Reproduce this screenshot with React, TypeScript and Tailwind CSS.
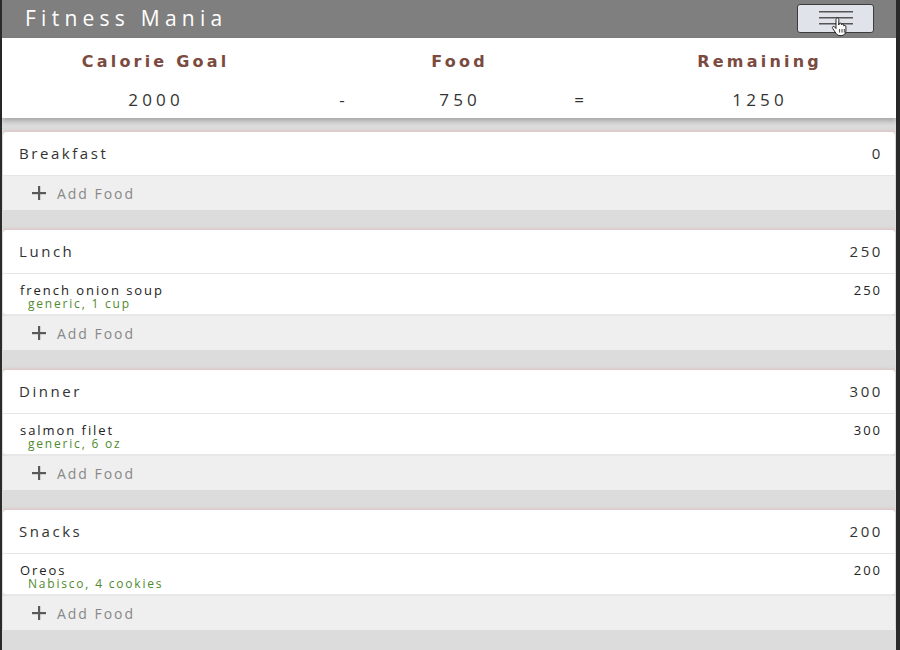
import React from "react";

type Food = { name: string; detail: string; cals: number };
type Meal = { title: string; total: number; foods: Food[] };

const meals: Meal[] = [
  { title: "Breakfast", total: 0, foods: [] },
  { title: "Lunch", total: 250, foods: [{ name: "french onion soup", detail: "generic, 1 cup", cals: 250 }] },
  { title: "Dinner", total: 300, foods: [{ name: "salmon filet", detail: "generic, 6 oz", cals: 300 }] },
  { title: "Snacks", total: 200, foods: [{ name: "Oreos", detail: "Nabisco, 4 cookies", cals: 200 }] },
];

const font = { fontFamily: '"Open Sans", "DejaVu Sans", sans-serif' };

const MenuButton = () => (
  <button className="relative self-start mt-[4px] w-[77px] h-[29px] rounded-[3px] border border-[#3c3c3c] bg-[#e1e3ea] flex items-center justify-center">
    <svg width="36" height="18" viewBox="0 0 36 18">
      <rect x="1" y="1" width="34" height="1.5" fill="#555" />
      <rect x="1" y="7" width="34" height="1.5" fill="#555" />
      <rect x="1" y="13" width="34" height="1.5" fill="#555" />
    </svg>
    <svg className="absolute left-[32px] top-[12px]" width="20" height="20" viewBox="0 0 20 20">
      <path
        d="M6 2.5c0-.9.6-1.5 1.4-1.5s1.4.6 1.4 1.5V8l.2-1c.2-.7.8-1 1.4-.9.6.1 1 .6 1 1.2v.6c.2-.6.7-.9 1.3-.8.6.1 1 .6 1 1.2v.8c.2-.5.7-.8 1.2-.7.6.1 1 .6 1 1.2V14c0 2.6-2 4.6-4.6 4.6H10c-1.6 0-3-.8-3.9-2.1L2.6 11.3c-.4-.6-.2-1.3.3-1.7.6-.4 1.3-.3 1.7.2L6 11.6z"
        fill="#fff"
        stroke="#111"
        strokeWidth="0.9"
        strokeLinejoin="round"
      />
      <path d="M9.6 12v3.6M12 12v3.6M14.3 12v3.6" stroke="#111" strokeWidth="0.8" />
    </svg>
  </button>
);

const Plus = () => (
  <svg width="14" height="14" viewBox="0 0 14 14">
    <rect x="0" y="6" width="14" height="2.2" fill="#5a5a5a" />
    <rect x="6" y="0" width="2.2" height="14" fill="#5a5a5a" />
  </svg>
);

const MealCard = ({ meal }: { meal: Meal }) => (
  <div className="mx-[1px] shadow-[0_-2px_3px_-1px_rgba(230,140,140,0.35)]">
    <div className="bg-white rounded-t-[4px] h-[44px] flex items-center justify-between pl-[16px] pr-[12px] text-[15px] text-[#333] tracking-[0.17em] border-b border-[#e6e6e6]">
      <span>{meal.title}</span>
      <span>{meal.total}</span>
    </div>
    {meal.foods.map((f) => (
      <div
        key={f.name}
        className="bg-white h-[42px] flex justify-between pl-[17px] pr-[13px] pt-[9px] border-b-2 border-[#e8e8e8] rounded-b-[4px]"
      >
        <div className="flex flex-col">
          <span className="text-[13px] leading-[14px] text-[#222] tracking-[0.15em]">{f.name}</span>
          <span className="text-[12px] leading-[14px] text-[#4f8a2e] tracking-[0.15em] pl-[8px]">{f.detail}</span>
        </div>
        <span className="text-[13px] leading-[14px] text-[#222] tracking-[0.15em]">{f.cals}</span>
      </div>
    ))}
    <div className="bg-[#efefef] h-[34px] flex items-center pl-[29px] gap-[11px] text-[14px] text-[#888] tracking-[0.14em]">
      <Plus />
      <span>Add Food</span>
    </div>
  </div>
);

const label =
  "font-['DejaVu_Sans',sans-serif] font-bold text-[16px] leading-[24px] text-[#7b4a40] tracking-[0.2em] pt-[12px] pl-[0.2em]";
const value = "text-[17px] leading-[24px] text-[#333] tracking-[0.25em] pt-[4px] pl-[0.25em]";

export default function App() {
  return (
    <div className="w-[900px] h-[650px] overflow-hidden bg-[#2a2a2a] flex" style={font}>
      <div className="ml-[2px] w-[894px] h-full bg-[#dcdcdc] flex flex-col">
        <div className="h-[38px] bg-[#7f7f7f] flex items-center justify-between pl-[23px] pr-[22px] shrink-0">
          <span className="text-white text-[21px] tracking-[0.25em]">Fitness Mania</span>
          <MenuButton />
        </div>
        <div className="bg-white h-[80px] shrink-0 shadow-[0_3px_5px_rgba(0,0,0,0.25)] relative z-10 grid grid-cols-[304px_72px_160px_82px_1fr] grid-rows-[46px_34px] text-center">
          <div className={label}>Calorie Goal</div>
          <div />
          <div className={label}>Food</div>
          <div />
          <div className={label}>Remaining</div>
          <div className={value}>2000</div>
          <div className="text-[17px] leading-[24px] text-[#333] pt-[4px]">-</div>
          <div className={value}>750</div>
          <div className="text-[17px] leading-[24px] text-[#333] pt-[4px]">=</div>
          <div className={value}>1250</div>
        </div>
        <div className="flex flex-col gap-[20px] pt-[14px]">
          {meals.map((m) => (
            <MealCard key={m.title} meal={m} />
          ))}
        </div>
      </div>
    </div>
  );
}
